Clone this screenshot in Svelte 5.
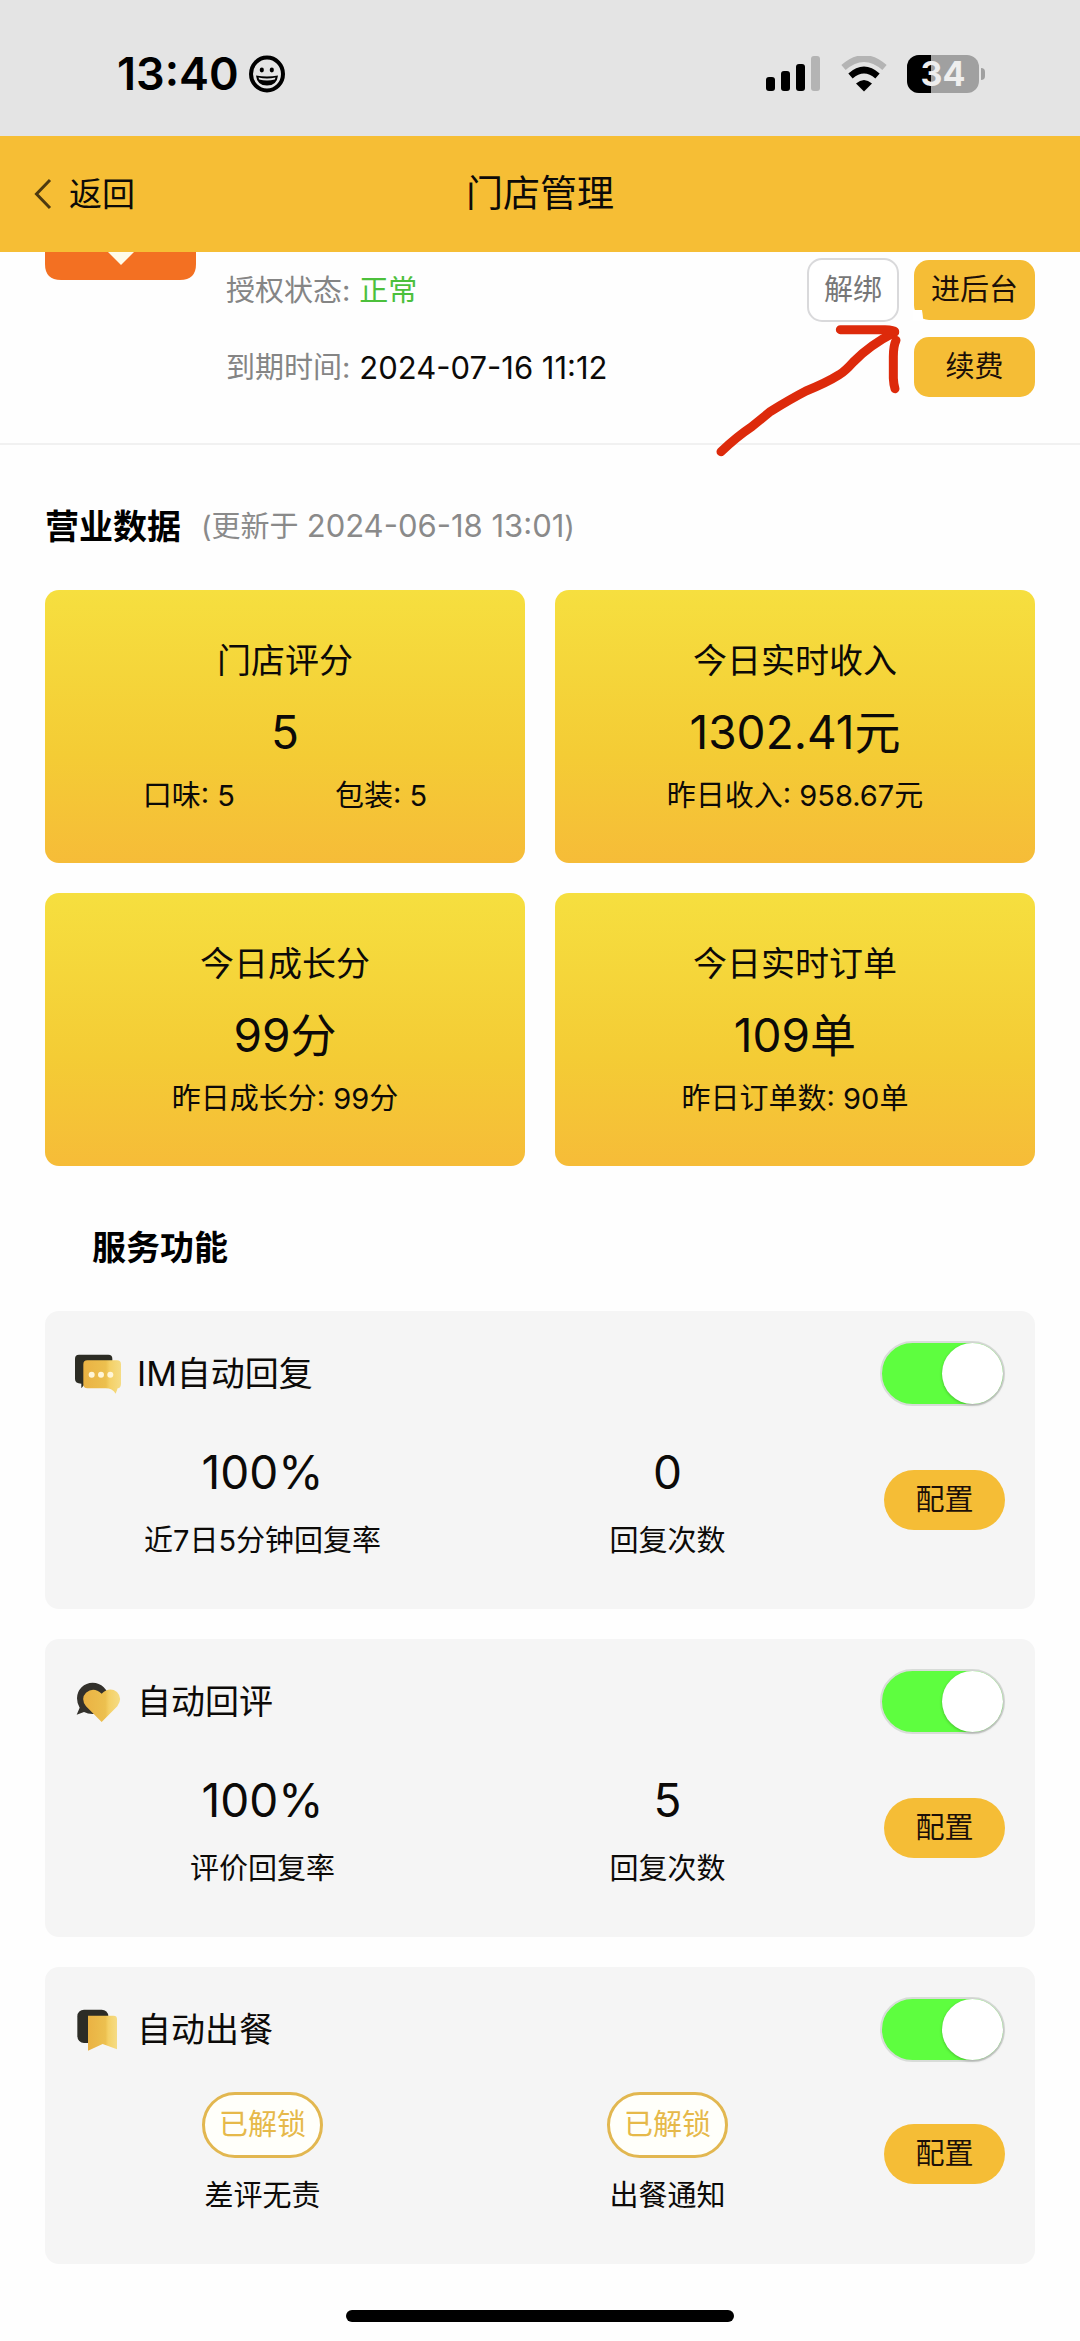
<script>
    const status = { time: '13:40', battery: 34 };

    const store = {
        state: '正常',
        expires: '2024-07-16 11:12',
        updated: '2024-06-18 13:01'
    };

    const metrics = [
        { title: '门店评分', value: '5', notes: ['口味: 5', '包装: 5'] },
        { title: '今日实时收入', value: '1302.41元', notes: ['昨日收入: 958.67元'] },
        { title: '今日成长分', value: '99分', notes: ['昨日成长分: 99分'] },
        { title: '今日实时订单', value: '109单', notes: ['昨日订单数: 90单'] }
    ];

    let services = $state([
        {
            id: 'im',
            name: 'IM自动回复',
            enabled: true,
            stats: [
                { value: '100%', label: '近7日5分钟回复率' },
                { value: '0', label: '回复次数' }
            ]
        },
        {
            id: 'review',
            name: '自动回评',
            enabled: true,
            stats: [
                { value: '100%', label: '评价回复率' },
                { value: '5', label: '回复次数' }
            ]
        },
        {
            id: 'meal',
            name: '自动出餐',
            enabled: true,
            stats: [
                { tag: '已解锁', label: '差评无责' },
                { tag: '已解锁', label: '出餐通知' }
            ]
        }
    ]);
</script>

<div class="page">
    <div class="status-bar">
        <div class="clock">
            <span>{status.time}</span>
            <svg width="36" height="38" viewBox="0 0 36 38" aria-hidden="true">
                <ellipse cx="18" cy="19" rx="16" ry="16.5" fill="none" stroke="#000" stroke-width="4" />
                <ellipse cx="12.8" cy="15" rx="2.1" ry="2.4" />
                <ellipse cx="22.8" cy="15" rx="2.1" ry="2.4" />
                <path d="M7 20.500Q18 22.500 29 20.500Q28 30.500 18 30.500Q8 30.500 7 20.500Z" />
                <path d="M9.500 22.600Q18 24.400 26.500 22.600L25.800 24.600Q18 26.400 10.200 24.600Z" fill="#e4e4e4" />
            </svg>
        </div>
        <div class="signals">
            <svg width="55" height="36" viewBox="0 0 55 36" aria-hidden="true">
                <rect x="0" y="21" width="9" height="14" rx="3" />
                <rect x="15" y="15" width="9" height="20" rx="3" />
                <rect x="30" y="8" width="9" height="27" rx="3" />
                <rect x="45" y="0" width="9" height="35" rx="3" fill="#b4b4b4" />
            </svg>
            <svg width="48" height="36" viewBox="0 0 48 36" aria-hidden="true">
                <path d="M3.500 11.500Q24 -6.500 44.500 11.500" fill="none" stroke="#b4b4b4" stroke-width="6.500" />
                <path d="M10.500 20Q24 8 37.500 20" fill="none" stroke="#000" stroke-width="6.500" />
                <path d="M16 27.500Q24 20.500 32 27.500L24 35.500Z" />
            </svg>
            <div class="battery">
                <div class="cell">
                    <span class="charge" style="width: {status.battery}%"></span>
                    <span class="percent">{status.battery}</span>
                </div>
                <span class="tip"></span>
            </div>
        </div>
    </div>

    <header>
        <a class="back" href="#back">
            <svg width="18" height="32" viewBox="0 0 18 32" aria-hidden="true">
                <path d="M16 2L2.500 16L16 30" fill="none" stroke="#4d3a10" stroke-width="3" />
            </svg>
            返回
        </a>
        <h1>门店管理</h1>
    </header>

    <section class="store">
        <svg class="logo" width="151" height="28" viewBox="0 0 151 28" aria-hidden="true">
            <path d="M0 0H151V12Q151 28 135 28H16Q0 28 0 12Z" fill="#f37022" />
            <path d="M63 0H89L76 13Z" fill="#fffbe8" />
        </svg>
        <dl>
            <div>
                <dt>授权状态:</dt>
                <dd class="ok">{store.state}</dd>
            </div>
            <div>
                <dt>到期时间:</dt>
                <dd class="date">{store.expires}</dd>
            </div>
        </dl>
        <div class="actions">
            <div class="pair">
                <button class="unbind">解绑</button>
                <button class="solid">进后台</button>
            </div>
            <button class="solid">续费</button>
        </div>
        <svg class="arrow" width="220" height="153" viewBox="219 201 660 459" aria-hidden="true">
            <path d="M818 210H846Q848 222 850 244H818Z" fill="#fff" />
            <g fill="none" stroke="#dd2a0b" stroke-width="27" stroke-linecap="round" stroke-linejoin="round">
                <path d="M243 635Q290 590 335 560Q370 532 392 514Q450 478 498 453Q560 428 598 404Q615 394 640 366Q690 315 764 277" />
                <path d="M601 269H735Q760 270 764 274" />
                <path d="M768 301Q760 318 760 350V415Q761 435 765 446" />
            </g>
        </svg>
    </section>

    <section class="data">
        <h2>营业数据 <small>(更新于 <span class="date">{store.updated}</span>)</small></h2>
        <div class="metrics">
            {#each metrics as metric (metric.title)}
                <article>
                    <h3>{metric.title}</h3>
                    <p class="value">{metric.value}</p>
                    <div class="notes">
                        {#each metric.notes as note}
                            <span>{note}</span>
                        {/each}
                    </div>
                </article>
            {/each}
        </div>
    </section>

    <section class="services">
        <h2>服务功能</h2>
        {#each services as service (service.id)}
            <article>
                <div class="top">
                    <svg width="48" height="42" viewBox="0 0 144 126" aria-hidden="true">
                        <defs>
                            <linearGradient id="gold-{service.id}">
                                <stop offset="0" stop-color="#eab243" />
                                <stop offset="0.600" stop-color="#ecc04f" />
                                <stop offset="0.700" stop-color="#f4d066" />
                                <stop offset="1" stop-color="#f5dc85" />
                            </linearGradient>
                        </defs>
                        {#if service.id === 'im'}
                            <path d="M12 5H100Q112 5 112 17V90H32L19 106V92Q0 92 0 78V17Q0 5 12 5Z" fill="#2c2c24" />
                            <path d="M37 22H126Q138 22 138 34V92Q138 104 128 106L122 122Q112 106 92 106H37Q25 106 25 94V34Q25 22 37 22Z" fill="url(#gold-im)" />
                            <circle cx="50" cy="65" r="9" fill="#fff6d8" />
                            <circle cx="78" cy="65" r="9" fill="#fff6d8" />
                            <circle cx="106" cy="65" r="9" fill="#fff6d8" />
                        {:else if service.id === 'review'}
                            <path d="M53 5A47 47 0 0 1 53 99Q38 99 27 93L5 101L14 80Q6 68 6 52A47 47 0 0 1 53 5Z" fill="#33312c" />
                            <path d="M80 123L33 76Q16 52 33 35Q56 16 80 38Q104 16 126 33Q144 52 127 76Z" fill="url(#gold-review)" />
                        {:else}
                            <rect x="7" y="2" width="93" height="100" rx="20" fill="#2c2c26" />
                            <path d="M39 20H116Q126 20 126 30V121L83 105L39 125Z" fill="url(#gold-meal)" />
                        {/if}
                    </svg>
                    <label for="switch-{service.id}">{service.name}</label>
                    <input id="switch-{service.id}" type="checkbox" role="switch" bind:checked={service.enabled} />
                </div>
                <div class="body" class:tagged={service.stats[0].tag}>
                    {#each service.stats as stat}
                        <div class="stat">
                            {#if stat.tag}
                                <span class="tag">{stat.tag}</span>
                            {:else}
                                <span class="value">{stat.value}</span>
                            {/if}
                            <span class="label">{stat.label}</span>
                        </div>
                    {/each}
                    <button class="solid round">配置</button>
                </div>
            </article>
        {/each}
    </section>

    <div class="home-indicator"></div>
</div>

<style>
    :global(body) {
        background: #fefefe;
    }
    .page {
        font-family: Inter, "Noto Sans CJK SC", sans-serif;
        font-size: 29px;
        line-height: 40px;
        color: #0c0a08;
    }
    h1, h2, h3, p, dl, dd {
        margin: 0;
    }
    button {
        box-sizing: border-box;
        padding: 0;
        font: inherit;
        cursor: pointer;
    }

    .status-bar {
        display: flex;
        justify-content: space-between;
        align-items: center;
        box-sizing: border-box;
        height: 136px;
        padding: 11px 95px 0 117px;
        background: #e4e4e4;
    }
    .clock {
        display: flex;
        align-items: center;
        gap: 10px;
        font-size: 45px;
        font-weight: 600;
        color: #000;
    }
    .signals {
        display: flex;
        align-items: center;
        gap: 19px;
    }
    .battery {
        display: flex;
        align-items: center;
        gap: 2px;
    }
    .cell {
        position: relative;
        width: 72px;
        border-radius: 12px;
        background: #a0a0a0;
    }
    .charge {
        position: absolute;
        inset: 0 auto 0 0;
        border-radius: 12px 0 0 12px;
        background: #000;
    }
    .percent {
        position: relative;
        display: block;
        text-align: center;
        font-size: 34px;
        font-weight: 700;
        line-height: 38px;
        color: #eee;
    }
    .tip {
        width: 4px;
        height: 12px;
        border-radius: 0 6px 6px 0;
        background: #a0a0a0;
    }

    header {
        display: grid;
        grid-template-columns: 1fr auto 1fr;
        align-items: center;
        height: 116px;
        padding: 0 34px;
        background: #f6be35;
    }
    .back {
        display: flex;
        align-items: center;
        gap: 17px;
        font-size: 33px;
        color: inherit;
        text-decoration: none;
    }
    h1 {
        font-size: 37px;
        font-weight: 400;
    }

    .store {
        position: relative;
        display: flex;
        align-items: flex-start;
        padding: 0 45px 46px;
        border-bottom: 2px solid #f1f1f1;
    }
    dl {
        flex: 1;
        display: flex;
        flex-direction: column;
        gap: 37px;
        padding: 19px 0 0 30px;
    }
    dl div {
        display: flex;
        gap: 9px;
    }
    dt {
        color: #858585;
    }
    .ok {
        color: #4cc03c;
    }
    .date {
        font-size: 31px;
    }
    .actions {
        display: flex;
        flex-direction: column;
        align-items: flex-end;
        gap: 15px;
        padding-top: 6px;
    }
    .pair {
        display: flex;
        align-items: center;
        gap: 15px;
    }
    .unbind {
        width: 92px;
        height: 64px;
        border: 2px solid #d9d9db;
        border-radius: 15px;
        background: #fff;
        color: #777;
    }
    .solid {
        width: 121px;
        height: 60px;
        border: 0;
        border-radius: 15px;
        background: #f5bd36;
        color: #1c0f08;
    }
    .round {
        border-radius: 30px;
    }
    /* hand-drawn pointer over the actions */
    .arrow {
        position: absolute;
        top: 55px;
        right: 147px;
        pointer-events: none;
    }

    h2 {
        display: flex;
        align-items: center;
        gap: 20px;
        font-size: 34px;
        font-weight: 700;
        line-height: 50px;
        color: #000;
    }
    small {
        font-size: 29px;
        font-weight: 400;
        color: #8a8a8a;
    }
    .data {
        padding: 56px 45px 0;
    }
    .metrics {
        display: grid;
        grid-template-columns: 1fr 1fr;
        gap: 30px;
        margin-top: 38px;
    }
    .metrics article {
        padding: 47px 0;
        border-radius: 14px;
        background: linear-gradient(#f6df3f, #f4cc35 60%, #f6bc38);
        text-align: center;
    }
    h3 {
        font-size: 34px;
        font-weight: 400;
        line-height: 48px;
    }
    .value {
        font-size: 46px;
        line-height: 60px;
    }
    .metrics .value {
        margin: 17px 0 14px;
    }
    .notes {
        display: flex;
        justify-content: center;
        gap: 100px;
    }

    .services {
        display: flex;
        flex-direction: column;
        gap: 30px;
        padding: 57px 45px 46px;
    }
    .services h2 {
        padding-left: 47px;
        margin-bottom: 8px;
    }
    .services article {
        padding: 30px 0 48px;
        border-radius: 14px;
        background: #f5f5f5;
    }
    .top {
        display: flex;
        align-items: center;
        gap: 14px;
        padding: 0 30px;
        font-size: 34px;
    }
    .top label {
        flex: 1;
    }
    input {
        appearance: none;
        box-sizing: border-box;
        width: 125px;
        height: 65px;
        margin: 0;
        border: 2px solid #d8dcd8;
        border-radius: 33px;
        background: #fff;
    }
    input::before {
        content: "";
        display: block;
        width: 61px;
        height: 61px;
        border-radius: 50%;
        background: #fff;
        box-shadow: 0 1px 3px #0004;
    }
    input:checked {
        background: #5efe3f;
    }
    input:checked::before {
        margin-left: auto;
    }
    .body {
        display: flex;
        align-items: center;
        padding: 33px 30px 0 15px;
    }
    .stat {
        flex: 1;
        display: flex;
        flex-direction: column;
        align-items: center;
        gap: 16px;
    }
    .stat .value {
        line-height: 66px;
    }
    .body .solid {
        margin-left: 14px;
    }
    .tagged {
        padding-top: 30px;
    }
    .tagged .stat {
        gap: 18px;
    }
    .tag {
        box-sizing: border-box;
        width: 121px;
        height: 66px;
        border: 3px solid #e2b750;
        border-radius: 33px;
        background: #fffffa;
        line-height: 60px;
        text-align: center;
        color: #e6b94a;
    }
    .home-indicator {
        width: 36%;
        height: 12px;
        margin: 0 auto 20px;
        border-radius: 6px;
        background: #000;
    }
</style>
